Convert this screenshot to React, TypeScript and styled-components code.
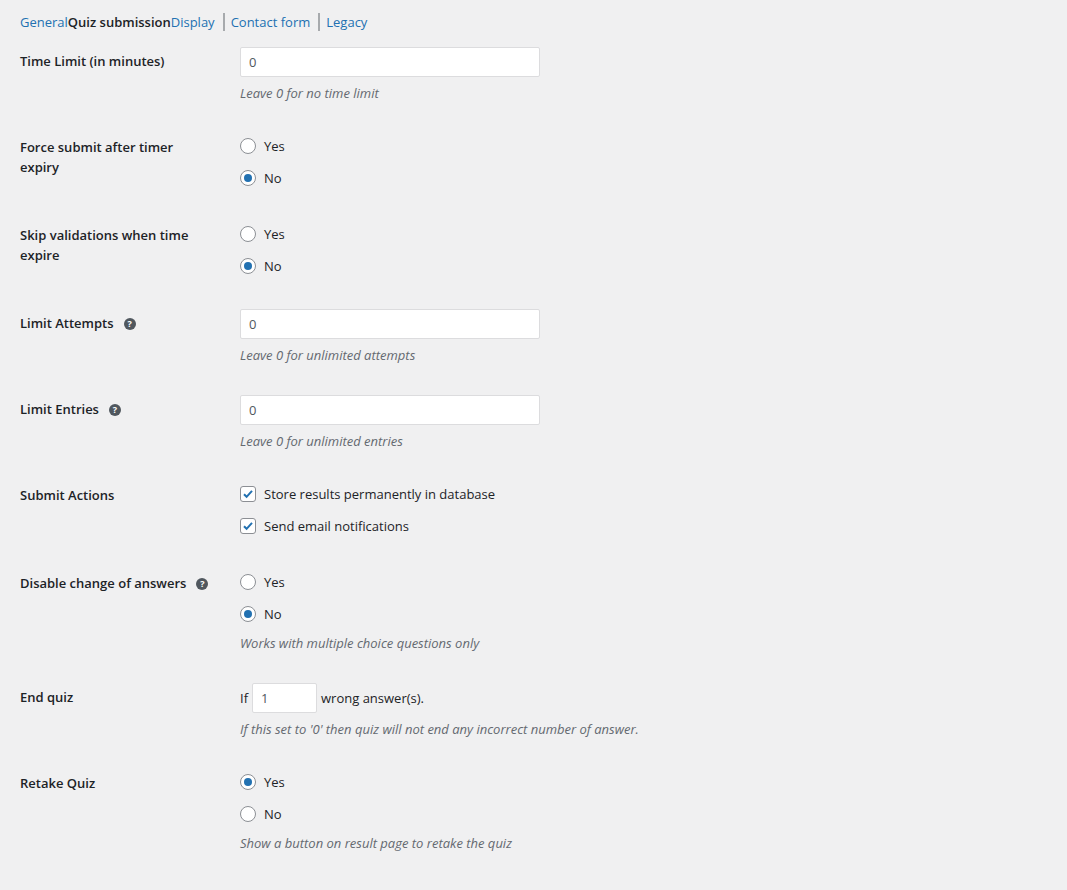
import styled, { createGlobalStyle } from "styled-components";

const Global = createGlobalStyle`
  body {
    margin: 0;
    background: #f0f0f1;
    font-family: "Open Sans", "Liberation Sans", sans-serif;
    font-size: 13px;
    color: #1d2327;
  }
`;

const Page = styled.div`
  padding: 10px 20px 20px;
`;

const Tabs = styled.ul`
  display: flex;
  align-items: center;
  list-style: none;
  margin: 0;
  padding: 2px 0 0;
  height: 20px;
`;

const Tab = styled.li<{ $current?: boolean }>`
  display: flex;
  align-items: center;
  color: ${(p) => (p.$current ? "#1d2327" : "#2271b1")};
  font-weight: ${(p) => (p.$current ? 600 : 400)};
  & + &::before {
    content: "";
    width: 2px;
    height: 18px;
    background: #a7aaad;
    margin: 0 6px 0 8px;
  }
`;

const Row = styled.div`
  display: grid;
  grid-template-columns: 220px 1fr;
`;

const Label = styled.div`
  padding: 20px 10px 20px 0;
  font-weight: 600;
  line-height: 1.5;
  display: flex;
  align-items: flex-start;
  gap: 10px;
  span { max-width: 180px; }
`;

const Field = styled.div`
  padding: 15px 0;
`;

const TextInput = styled.input<{ $w?: number }>`
  box-sizing: border-box;
  width: ${(p) => p.$w ?? 300}px;
  height: 30px;
  border: 1px solid #dcdcde;
  border-radius: 2px;
  background: #fff;
  padding: 0 8px;
  font: inherit;
  color: #50575e;
  outline: none;
`;

const Desc = styled.p`
  margin: 6px 0 0;
  font-style: italic;
  color: #646970;
  line-height: 20px;
`;

const Option = styled.label`
  display: flex;
  align-items: center;
  gap: 8px;
  height: 26px;
  margin-bottom: 6px;
  &:last-of-type { margin-bottom: 0; }
`;

const Radio = styled.span<{ $on?: boolean }>`
  box-sizing: border-box;
  width: 16px;
  height: 16px;
  border-radius: 50%;
  border: 1px solid #8c8f94;
  background: #fff;
  display: flex;
  align-items: center;
  justify-content: center;
  &::after {
    content: "";
    width: 8px;
    height: 8px;
    border-radius: 50%;
    background: ${(p) => (p.$on ? "#2271b1" : "transparent")};
  }
`;

const Check = styled.span`
  box-sizing: border-box;
  width: 16px;
  height: 16px;
  border-radius: 3px;
  border: 1px solid #8c8f94;
  background: #fff;
  display: flex;
  align-items: center;
  justify-content: center;
`;

const Help = styled.span`
  width: 12px;
  height: 12px;
  margin-top: 4px;
  border-radius: 50%;
  background: #50575e;
  color: #fff;
  font-size: 9px;
  font-weight: 700;
  line-height: 12px;
  text-align: center;
  flex-shrink: 0;
`;

const Inline = styled.div`
  display: flex;
  align-items: center;
  gap: 4px;
`;

function YesNo({ yes }: { yes: boolean }) {
  return (
    <>
      <Option><Radio $on={yes} />Yes</Option>
      <Option><Radio $on={!yes} />No</Option>
    </>
  );
}

function Tick() {
  return (
    <svg width="14" height="14" viewBox="0 0 14 14">
      <path d="M3 7.2l2.6 2.6L11 3.8" fill="none" stroke="#2271b1" strokeWidth="2" />
    </svg>
  );
}

export default function App() {
  return (
    <Page>
      <Global />
      <Tabs>
        <Tab>General</Tab>
        <Tab $current>Quiz submission</Tab>
        <Tab>Display</Tab>
        <Tab>Contact form</Tab>
        <Tab>Legacy</Tab>
      </Tabs>
      <Row>
        <Label><span>Time Limit (in minutes)</span></Label>
        <Field>
          <TextInput defaultValue="0" />
          <Desc>Leave 0 for no time limit</Desc>
        </Field>
      </Row>
      <Row>
        <Label><span>Force submit after timer expiry</span></Label>
        <Field><YesNo yes={false} /></Field>
      </Row>
      <Row>
        <Label><span>Skip validations when time expire</span></Label>
        <Field><YesNo yes={false} /></Field>
      </Row>
      <Row>
        <Label><span>Limit Attempts</span><Help>?</Help></Label>
        <Field>
          <TextInput defaultValue="0" />
          <Desc>Leave 0 for unlimited attempts</Desc>
        </Field>
      </Row>
      <Row>
        <Label><span>Limit Entries</span><Help>?</Help></Label>
        <Field>
          <TextInput defaultValue="0" />
          <Desc>Leave 0 for unlimited entries</Desc>
        </Field>
      </Row>
      <Row>
        <Label><span>Submit Actions</span></Label>
        <Field>
          <Option><Check><Tick /></Check>Store results permanently in database</Option>
          <Option><Check><Tick /></Check>Send email notifications</Option>
        </Field>
      </Row>
      <Row>
        <Label><span>Disable change of answers</span><Help>?</Help></Label>
        <Field>
          <YesNo yes={false} />
          <Desc>Works with multiple choice questions only</Desc>
        </Field>
      </Row>
      <Row>
        <Label><span>End quiz</span></Label>
        <Field>
          <Inline>If <TextInput $w={65} defaultValue="1" /> wrong answer(s).</Inline>
          <Desc>If this set to '0' then quiz will not end any incorrect number of answer.</Desc>
        </Field>
      </Row>
      <Row>
        <Label><span>Retake Quiz</span></Label>
        <Field>
          <YesNo yes={true} />
          <Desc>Show a button on result page to retake the quiz</Desc>
        </Field>
      </Row>
    </Page>
  );
}
